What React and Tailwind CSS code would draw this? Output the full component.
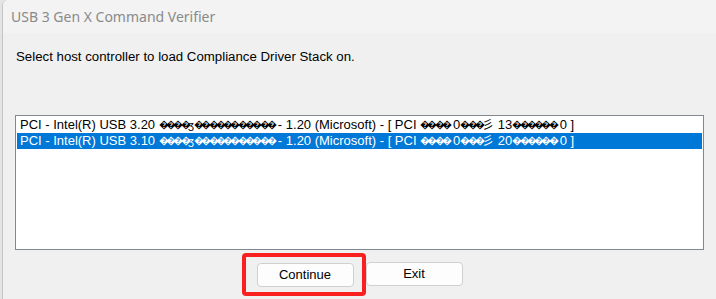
import React, { useState } from 'react';

// a run of replacement glyphs, drawn narrower like the original list font
const Junk = ({ n }) => (
  <span className="text-[10px] tracking-[-2.7px] align-[1px]">{'\uFFFD'.repeat(n)}</span>
);

const Row = ({ ver, num }) => (
  <>
    {'PCI - Intel(R) USB ' + ver + ' '}
    <Junk n={4} />
    <span className="text-[11px]">{'\u0292'}</span>
    <Junk n={11} />
    {' - 1.20 (Microsoft) - [ PCI '}
    <Junk n={4} />
    {' 0'}
    <Junk n={3} />
    <span className="text-[12px]">{'\u5F61'}</span>
    {' ' + num}
    <Junk n={6} />
    {' 0 ]'}
  </>
);

const rows = [
  { ver: '3.20', num: '13' },
  { ver: '3.10', num: '20' },
];

const App = () => {
  const [selected, setSelected] = useState(1);

  return (
    <div className="w-[716px] h-[299px] flex bg-[#e4e4e4] overflow-hidden font-['Liberation_Sans','Noto_Sans_CJK_SC',sans-serif]">
      <div className="w-[2px] shrink-0" />
      <div className="flex-1 flex flex-col bg-[#f0f0f0] border-l border-[#c4c4c4] rounded-tl-[6px] overflow-hidden">
        {/* title bar */}
        <div className="h-[33px] shrink-0 bg-[#f3f3f3] flex items-center pl-[8px] text-[14px] text-[#8a8a8a] font-['Noto_Sans',sans-serif]">
          USB 3 Gen X Command Verifier
        </div>

        <div className="flex-1 flex flex-col">
          <p className="mt-[16px] ml-[13px] text-[13.25px] leading-[16px] text-black">
            Select host controller to load Compliance Driver Stack on.
          </p>

          <div className="mt-[50px] ml-[12px] w-[689px] h-[135px] bg-white border border-[#828790] p-px">
            {rows.map((row, i) => (
              <div
                key={i}
                onClick={() => setSelected(i)}
                className={
                  i === selected
                    ? 'h-[16px] pl-[3px] text-[13px] leading-[16px] whitespace-nowrap overflow-hidden bg-[#0078d7] text-white'
                    : 'h-[16px] pl-[3px] text-[13px] leading-[16px] whitespace-nowrap overflow-hidden text-black'
                }
              >
                <Row ver={row.ver} num={row.num} />
              </div>
            ))}
          </div>

          <div className="mt-[12px] flex justify-center gap-[12px]">
            <div className="relative">
              <button className="w-[97px] h-[24px] bg-[#fdfdfd] border border-[#d0d0d0] rounded-[4px] text-[13px] text-black">
                Continue
              </button>
              {/* annotation box */}
              <div className="absolute left-[-15px] top-[-9px] w-[124px] h-[43px] border-[4px] border-[#fa2020] rounded-[4px] pointer-events-none" />
            </div>
            <button className="w-[97px] h-[24px] bg-[#fdfdfd] border border-[#d0d0d0] rounded-[4px] text-[13px] text-black">
              Exit
            </button>
          </div>
        </div>
      </div>
    </div>
  );
};

export default App;
